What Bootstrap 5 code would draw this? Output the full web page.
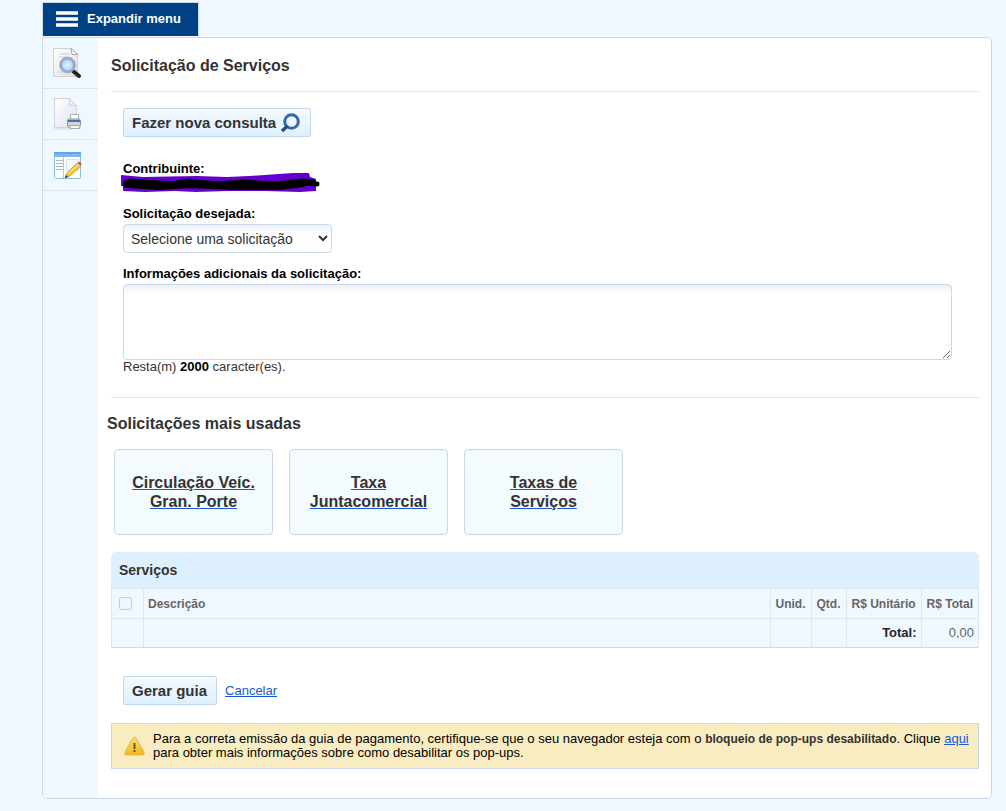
<!DOCTYPE html>
<html lang="pt-BR">
<head>
<meta charset="utf-8">
<meta name="viewport" content="width=device-width, initial-scale=1">
<title>Solicitação de Serviços</title>
<link href="https://cdn.jsdelivr.net/npm/bootstrap@5.3.0/dist/css/bootstrap.min.css" rel="stylesheet">
<style>
  body { background: #f0f8ff; color: #333; font: 13px/16px "Liberation Sans", Arial, sans-serif; }
  .page-wrap { padding: 2px 14px 12px 42px; }
  .menu-toggle { background: #004085; color: #fff; border: 1px solid #c9d9ea; border-bottom: 0; width: 157px; height: 34px; margin-bottom: 1px; padding: 0 0 2px 13px; font-size: 13px; font-weight: bold; }
  .panel { border: 1px solid #c9d9ea; border-radius: 0 5px 5px 5px; background: #fff; overflow: hidden; }
  .side { width: 55px; background: #f0f8ff; }
  .side a { display: flex; height: 51px; padding-left: 9px; align-items: center; border-bottom: 1px solid #dce5f2; }
  .main-area { padding: 0 12px 29px 13px; }
  .heading { font-size: 16px; line-height: 20px; font-weight: bold; margin: 0; color: #333; }
  .page-title { padding: 18px 0 15px; border-bottom: 1px solid #dce5f2; }
  .used-title { margin-left: -4px; }
  .form-area { padding: 16px 27px 23px 12px; border-bottom: 1px solid #dce5f2; }
  .action-btn { height: 29px; padding: 0 9px 0 8px; border: 1px solid #c5d8eb; border-radius: 2px; background: linear-gradient(#f5faff, #dceffe); color: #333; font-size: 15px; line-height: 18px; font-weight: bold; }
  .actions { padding: 28px 12px 18px; }
  .field-name { display: block; color: #000; font-weight: bold; line-height: 16px; }
  .details-name { margin-top: 13px; }
  .soft-field { display: block; margin-top: 2px; border: 1px solid #c9d9ea; border-radius: 4px; color: #333; background: linear-gradient(#ecf0f8, #fff 9px); }
  select.soft-field { width: 209px; height: 29px; font-size: 14px; padding: 0 3px; }
  textarea.soft-field { width: 100%; height: 76px; }
  .remaining { line-height: 14px; }
  .scribble { display: block; margin: -4px 0 11px -2px; }
  .shortcuts { gap: 16px; padding: 15px 3px 17px; }
  .shortcut { width: 159px; height: 86px; border: 1px solid #c9d9ea; border-radius: 4px; background: #f3fbff; }
  .shortcut a { color: #1558d6; font-size: 16px; line-height: 19px; font-weight: bold; }
  .shortcut span { color: #333; }
  a { color: #1558d6; }
  .services { color: #666; border-collapse: separate; border-spacing: 0; width: 100%; }
  .services caption { caption-side: top; background: #def0ff; color: #333; font-weight: bold; font-size: 14px; line-height: 20px; padding: 8px; border-radius: 5px 5px 0 0; }
  .services th, .services td { background: #f0f8ff; border-top: 1px solid #dce5f2; border-right: 1px solid #dce5f2; height: 30px; padding: 0 4px; white-space: nowrap; }
  .services thead th { font-size: 12px; }
  .services tbody td { border-bottom: 1px solid #c9d9ea; }
  .services th.amount { padding: 0 5px; }
  .services tr > :first-child { border-left: 1px solid #dce5f2; padding: 0 11px 0 7px; }
  .services input { width: 13px; height: 13px; margin: 0; display: block; }
  .notice { background: #f9ecc1; border: 1px solid #c9d9ea; color: #000; line-height: 14px; padding: 8px 4px 8px 12px; }
  .notice strong { color: #333; font-size: 12px; }
</style>
</head>
<body>
<div class="page-wrap">
  <button type="button" class="menu-toggle d-flex align-items-center gap-2">
    <svg width="23" height="16" aria-hidden="true"><path d="M0 2h22M0 8h22M0 14h22" stroke="#fff" stroke-width="3.6"/></svg>
    Expandir menu
  </button>
  <div class="panel d-flex">
    <nav class="side flex-shrink-0" aria-label="Menu">
      <a href="#" aria-label="Consultar">
        <svg width="31" height="32" viewBox="0 0 31 32">
          <defs><linearGradient id="paper" x2="1" y2="1"><stop stop-color="#fff"/><stop offset="1" stop-color="#dcdde2"/></linearGradient>
          <radialGradient id="lens"><stop stop-color="#e5f2ff"/><stop offset="1" stop-color="#a3caf3"/></radialGradient></defs>
          <path d="M1.500 1.500h18l6 6v22h-24z" fill="url(#paper)" stroke="#d0d0d3"/>
          <path d="M19 1.500l1 6h6z" fill="#f5f5f5" stroke="#aaa"/>
          <path d="M8 7h10M7 10h8M5 25h10" stroke="#d2d2d5"/>
          <path d="M21 24l6 5" stroke="#222" stroke-width="4" stroke-linecap="round"/>
          <circle cx="15.500" cy="18" r="7.500" fill="url(#lens)" stroke="#a0a5ae" stroke-width="1.500"/>
          <circle cx="15.500" cy="18" r="6" fill="none" stroke="#6da5e4"/>
        </svg>
      </a>
      <a href="#" aria-label="Imprimir">
        <svg width="31" height="32" viewBox="0 0 31 32">
          <defs><linearGradient id="sheet" y2="1" x2="1"><stop stop-color="#fff"/><stop offset="1" stop-color="#dfe1ec"/></linearGradient></defs>
          <ellipse cx="13" cy="30" rx="12" ry="2" fill="#dfe6f1"/>
          <path d="M2.500.5h15l7 7v22h-22z" fill="url(#sheet)" stroke="#d0d2d9"/>
          <path d="M17.500.5v7h7z" fill="#eceef3" stroke="#d0d2d9"/>
          <path d="M18.500 16.500h8v5h-8z" fill="#fff" stroke="#aaa"/>
          <rect x="15.500" y="21" width="13" height="8" rx="2" fill="#d2d3d6" stroke="#8f939b"/>
          <path d="M16 23h12" stroke="#3f76b3" stroke-width="2"/>
          <path d="M18 27.500h9l1 3h-10z" fill="#f5f5f5" stroke="#aaa"/>
        </svg>
      </a>
      <a href="#" aria-label="Solicitar">
        <svg width="31" height="32" viewBox="0 0 31 32">
          <rect x="2.500" y="3.500" width="26" height="26" rx="1" fill="#fff" stroke="#8bbce9"/>
          <path d="M2 3h27v5h-27z" fill="#65a5e0"/><path d="M2 5h27v3h-27z" fill="#7db7ee"/>
          <path d="M11.500 8v21" stroke="#a5caee"/><rect x="14.500" y="10.500" width="12" height="11" fill="#f7fbff" stroke="#d2e3f3"/>
          <path d="M4 11.500h7M4 14.500h7M4 17.500h7M4 20.500h7" stroke="#a9b6c4"/>
          <path d="M13 29l2-5 10-10 4 3-11 10z" fill="#f4c82f" stroke="#bd8a20" stroke-width=".7"/>
          <path d="M16 25l10-9" stroke="#fff08a"/><path d="M24 15l2-2 3.500 3-2 2z" fill="#c6ccd2"/>
          <path d="M25.500 13.500q3-2 4 2l-1 1.500z" fill="#e3424c"/><path d="M13 29l1-3 2 2z" fill="#333"/>
        </svg>
      </a>
    </nav>
    <main class="main-area flex-grow-1">
      <h1 class="heading page-title">Solicitação de Serviços</h1>
      <form class="form-area">
        <button type="button" class="action-btn d-flex align-items-center">Fazer nova consulta
          <svg class="ms-1" width="21" height="20" viewBox="0 0 21 20" aria-hidden="true"><circle cx="11.500" cy="8.500" r="6.800" fill="none" stroke="#3868a3" stroke-width="3"/><path d="M7.500 13l-5.500 5" stroke="#294c7d" stroke-width="3.400"/></svg>
        </button>
        <div class="field-name mt-4">Contribuinte:</div>
        <svg class="scribble" width="200" height="22" viewBox="0 0 200 22" role="img" aria-label="Nome oculto">
          <path d="M0 2l22 2 54-1 30 1 22-1 30-2 14-1h16l1 4 6 2v12l-16 1-35-1-37 0-32 1-22-1-29 1-22-1v-5H0z" fill="#6501cc"/>
          <path d="M8 7l44 3 14-3 29 3 27-2 33 2 26-3 12 1" fill="none" stroke="#000" stroke-width="3" stroke-linecap="round"/>
          <path d="M6 11l32 2 31-2 43 2 46 0 24-3" fill="none" stroke="#000" stroke-width="8" stroke-linecap="round" stroke-linejoin="round"/>
          <path d="M180 10l16 1" stroke="#000" stroke-width="5" stroke-linecap="round"/>
        </svg>
        <label class="field-name" for="request">Solicitação desejada:</label>
        <select class="soft-field" id="request"><option>Selecione uma solicitação</option></select>
        <label class="field-name details-name" for="details">Informações adicionais da solicitação:</label>
        <textarea class="soft-field" id="details"></textarea>
        <div class="remaining">Resta(m) <b class="text-black">2000</b> caracter(es).</div>
      </form>
      <h2 class="heading used-title pt-3">Solicitações mais usadas</h2>
      <div class="shortcuts d-flex flex-wrap">
        <div class="shortcut d-flex align-items-center justify-content-center text-center"><a href="#"><span>Circulação Veíc.<br>Gran. Porte</span></a></div>
        <div class="shortcut d-flex align-items-center justify-content-center text-center"><a href="#"><span>Taxa<br>Juntacomercial</span></a></div>
        <div class="shortcut d-flex align-items-center justify-content-center text-center"><a href="#"><span>Taxas de<br>Serviços</span></a></div>
      </div>
      <table class="services">
        <caption>Serviços</caption>
        <thead><tr><th><input type="checkbox" aria-label="Selecionar todos" disabled></th><th class="w-100">Descrição</th><th class="amount">Unid.</th><th class="amount">Qtd.</th><th class="amount">R$ Unitário</th><th class="amount">R$ Total</th></tr></thead>
        <tbody><tr><td></td><td></td><td></td><td></td><td class="text-end fw-bold text-dark">Total:</td><td class="text-end">0,00</td></tr></tbody>
      </table>
      <div class="actions d-flex align-items-center gap-2">
        <button type="button" class="action-btn">Gerar guia</button><a href="#">Cancelar</a>
      </div>
      <div class="notice d-flex align-items-center gap-2">
        <svg class="flex-shrink-0" width="21" height="21" viewBox="0 0 21 21" aria-hidden="true"><defs><linearGradient id="warn" y2="1" x2="0"><stop stop-color="#f7e36e"/><stop offset="1" stop-color="#f2b51d"/></linearGradient></defs><path d="M9 2q1.500-2 3 0l8 14q1 3-2 3h-15q-3 0-2-3z" fill="url(#warn)" stroke="#e0b94c"/><path d="M10.500 7v6m0 1v2" stroke="#705b18" stroke-width="2"/></svg>
        <div>Para a correta emissão da guia de pagamento, certifique-se que o seu navegador esteja com o <strong>bloqueio de pop-ups desabilitado</strong>. Clique <a href="#">aqui</a> para obter mais informações sobre como desabilitar os pop-ups.</div>
      </div>
    </main>
  </div>
</div>
<script src="https://cdn.jsdelivr.net/npm/bootstrap@5.3.0/dist/js/bootstrap.bundle.min.js"></script>
</body>
</html>
